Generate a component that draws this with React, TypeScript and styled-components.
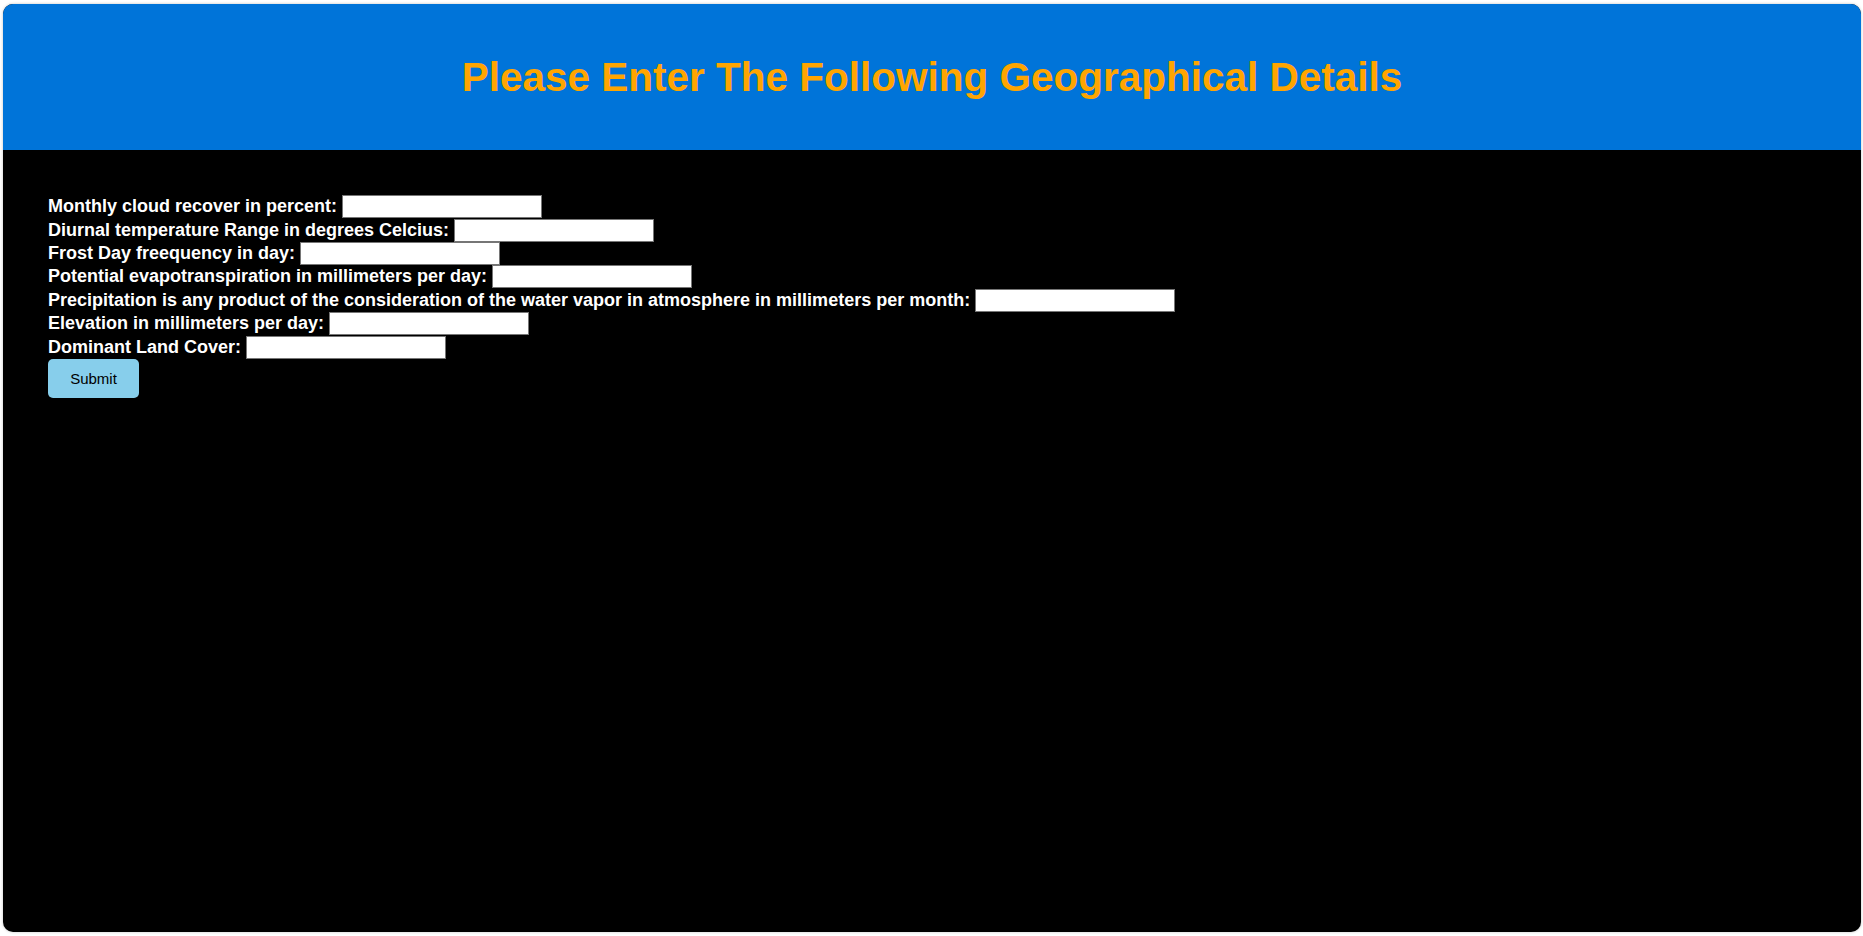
import React from "react";
import styled, { createGlobalStyle } from "styled-components";

const GlobalStyle = createGlobalStyle`
  html, body {
    margin: 0;
    padding: 0;
    background: #ffffff;
  }
  body {
    font-family: "Liberation Sans", Arial, sans-serif;
  }
`;

const Card = styled.div`
  margin: 4px 2px 4px 3px;
  height: 928px;
  border-radius: 10px;
  overflow: hidden;
  background: #000000;
  box-shadow: 0 0 3px rgba(0, 0, 0, 0.25);
  display: flex;
  flex-direction: column;
`;

const Header = styled.header`
  background: #0074d9;
  height: 146px;
  display: flex;
  align-items: center;
  justify-content: center;
`;

const Title = styled.h1`
  margin: 0;
  color: #ffa500;
  font-family: "Liberation Sans", Arial, sans-serif;
  font-weight: bold;
  font-size: 40.5px;
  padding-top: 1px;
`;

const Form = styled.form`
  padding: 45px;
  display: flex;
  flex-direction: column;
  align-items: flex-start;
`;

const Row = styled.div`
  display: flex;
  align-items: center;
  height: 23.4px;
`;

const Label = styled.label`
  color: #ffffff;
  font-weight: bold;
  font-size: 18px;
  white-space: pre;
`;

const Input = styled.input`
  box-sizing: border-box;
  width: 200px;
  height: 23px;
  margin: 0 0 0 5px;
  border: 1px solid #767676;
  background: #ffffff;
  padding: 1px 2px;
  font-size: 13px;
`;

const Button = styled.button`
  margin-top: 0;
  width: 91px;
  height: 39px;
  background: #87ceeb;
  border: none;
  border-radius: 5px;
  color: #000000;
  font-family: "Liberation Sans", Arial, sans-serif;
  font-size: 15px;
  cursor: pointer;
`;

const fields = [
  "Monthly cloud recover in percent:",
  "Diurnal temperature Range in degrees Celcius:",
  "Frost Day freequency in day:",
  "Potential evapotranspiration in millimeters per day:",
  "Precipitation is any product of the consideration of the water vapor in atmosphere in millimeters per month:",
  "Elevation in millimeters per day:",
  "Dominant Land Cover:",
];

export default function App() {
  return (
    <>
      <GlobalStyle />
      <Card>
        <Header>
          <Title>Please Enter The Following Geographical Details</Title>
        </Header>
        <Form onSubmit={(e) => e.preventDefault()}>
          {fields.map((f, i) => (
            <Row key={i}>
              <Label htmlFor={`f${i}`}>{f}</Label>
              <Input id={`f${i}`} type="text" />
            </Row>
          ))}
          <Button type="submit">Submit</Button>
        </Form>
      </Card>
    </>
  );
}
